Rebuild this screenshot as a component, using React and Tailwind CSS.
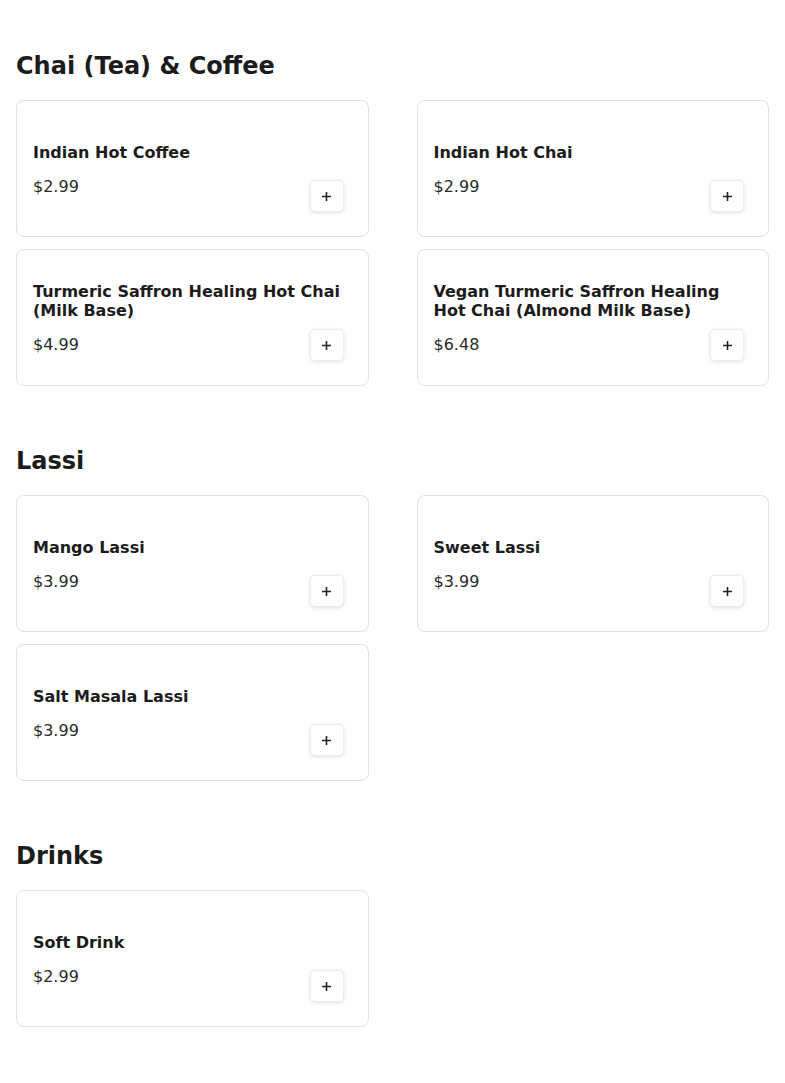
import React from "react";

const sections = [
  {
    title: "Chai (Tea) & Coffee",
    items: [
      { name: "Indian Hot Coffee", price: "$2.99" },
      { name: "Indian Hot Chai", price: "$2.99" },
      { name: "Turmeric Saffron Healing Hot Chai (Milk Base)", price: "$4.99" },
      { name: "Vegan Turmeric Saffron Healing Hot Chai (Almond Milk Base)", price: "$6.48" },
    ],
  },
  {
    title: "Lassi",
    items: [
      { name: "Mango Lassi", price: "$3.99" },
      { name: "Sweet Lassi", price: "$3.99" },
      { name: "Salt Masala Lassi", price: "$3.99" },
    ],
  },
  {
    title: "Drinks",
    items: [{ name: "Soft Drink", price: "$2.99" }],
  },
];

function Card({ name, price }) {
  return (
    <div className="relative h-[137px] rounded-lg border border-[#e2e2e2] bg-white px-4 flex items-center">
      <div className="flex flex-col pt-[4px]">
        <div className="text-base font-bold leading-[19px] text-[#1c1c1c]">{name}</div>
        <div className="mt-[13px] text-base leading-6 text-[#2a2a2a]">{price}</div>
      </div>
      <button className="absolute bottom-6 right-6 flex h-8 w-[34px] items-center justify-center rounded-[5px] border border-[#ececec] bg-white text-[#222] shadow-[0_1px_4px_rgba(0,0,0,0.12)]">
        <svg width="11" height="11" viewBox="0 0 11 11">
          <path d="M5.5 1v9M1 5.5h9" stroke="#222" strokeWidth="1.6" />
        </svg>
      </button>
    </div>
  );
}

export default function App() {
  return (
    <div
      className="min-h-[1083px] bg-white px-4 pt-[49px] pb-12"
      style={{ fontFamily: '"DejaVu Sans", sans-serif' }}
    >
      <div className="flex flex-col gap-[58px]">
        {sections.map((s) => (
          <section key={s.title}>
            <h2 className="mb-[17px] text-2xl font-bold leading-[34px] text-[#1c1c1c]">{s.title}</h2>
            <div className="grid grid-cols-2 gap-x-12 gap-y-3">
              {s.items.map((it) => (
                <Card key={it.name} {...it} />
              ))}
            </div>
          </section>
        ))}
      </div>
    </div>
  );
}
